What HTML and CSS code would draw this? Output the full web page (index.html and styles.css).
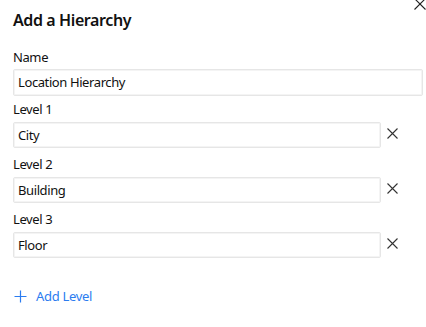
FILE: index.html
```html
<!DOCTYPE html>
<html lang="en">
<head>
<meta charset="utf-8">
<title>Add a Hierarchy</title>
<link rel="stylesheet" href="styles.css">
</head>
<body>
<div class="panel">
  <button class="close" aria-label="Close">
    <svg width="12" height="12" viewBox="0 0 12 12"><path d="M0.5 0.5L11.5 11.5M11.5 0.5L0.5 11.5" stroke="#222" stroke-width="1.1" fill="none"/></svg>
  </button>
  <h1 class="title">Add a Hierarchy</h1>

  <div class="field name-field">
    <label class="label">Name</label>
    <div class="input wide">Location Hierarchy</div>
  </div>

  <div class="field level">
    <label class="label">Level 1</label>
    <div class="row">
      <div class="input">City</div>
      <button class="remove" aria-label="Remove level"><svg width="11" height="11" viewBox="0 0 11 11"><path d="M0.5 0.5L10.5 10.5M10.5 0.5L0.5 10.5" stroke="#333" stroke-width="1.1" fill="none"/></svg></button>
    </div>
  </div>

  <div class="field level">
    <label class="label">Level 2</label>
    <div class="row">
      <div class="input">Building</div>
      <button class="remove" aria-label="Remove level"><svg width="11" height="11" viewBox="0 0 11 11"><path d="M0.5 0.5L10.5 10.5M10.5 0.5L0.5 10.5" stroke="#333" stroke-width="1.1" fill="none"/></svg></button>
    </div>
  </div>

  <div class="field level">
    <label class="label">Level 3</label>
    <div class="row">
      <div class="input">Floor</div>
      <button class="remove" aria-label="Remove level"><svg width="11" height="11" viewBox="0 0 11 11"><path d="M0.5 0.5L10.5 10.5M10.5 0.5L0.5 10.5" stroke="#333" stroke-width="1.1" fill="none"/></svg></button>
    </div>
  </div>

  <button class="add">
    <svg width="13" height="13" viewBox="0 0 13 13"><path d="M6.5 0.5V12.5M0.5 6.5H12.5" stroke="#2b7cf0" stroke-width="1.2" fill="none"/></svg>
    <span>Add Level</span>
  </button>
</div>
</body>
</html>
```
FILE: styles.css
```css
html, body {
  margin: 0;
  padding: 0;
  background: #ffffff;
}
body {
  font-family: "Noto Sans", "Open Sans", sans-serif;
  color: #111;
  overflow: hidden;
}
.panel {
  position: relative;
  padding: 8px 3px 0 13px;
  display: flex;
  flex-direction: column;
}
.close {
  position: absolute;
  top: -2px;
  right: 0;
  width: 12px;
  height: 12px;
  padding: 0;
  border: 0;
  background: none;
  display: flex;
}
.title {
  margin: 0;
  font-size: 16px;
  line-height: 24px;
  font-weight: 600;
  letter-spacing: -0.4px;
  color: #111;
}
.field {
  display: flex;
  flex-direction: column;
}
.name-field {
  margin-top: 15px;
}
.label {
  font-size: 13px;
  line-height: 20px;
  letter-spacing: -0.4px;
  margin-bottom: 2px;
}
.level {
  margin-top: 3px;
}
.level .label {
  margin-bottom: 3px;
}
.level + .level {
  margin-top: 6px;
}
.row {
  display: flex;
  align-items: center;
  padding-right: 20px;
}
.input {
  flex: 1;
  height: 26px;
  box-sizing: border-box;
  border: 1px solid #e6e6e6;
  box-shadow: 0 0 0 1px #f4f4f4 inset;
  border-radius: 2px;
  padding: 0 4px;
  font-size: 13px;
  line-height: 24px;
  letter-spacing: -0.4px;
  color: #111;
}
.input.wide {
  height: 27px;
  line-height: 25px;
}
.remove {
  width: 22px;
  height: 22px;
  padding: 0;
  border: 0;
  background: none;
  display: flex;
  align-items: center;
  justify-content: center;
  margin-top: -4px;
}
.add {
  margin-top: 28px;
  align-self: flex-start;
  display: flex;
  align-items: center;
  gap: 9px;
  padding: 0 0 0 1px;
  border: 0;
  background: none;
  font-family: inherit;
  font-size: 13px;
  line-height: 20px;
  letter-spacing: -0.3px;
  color: #2b7cf0;
}
```
